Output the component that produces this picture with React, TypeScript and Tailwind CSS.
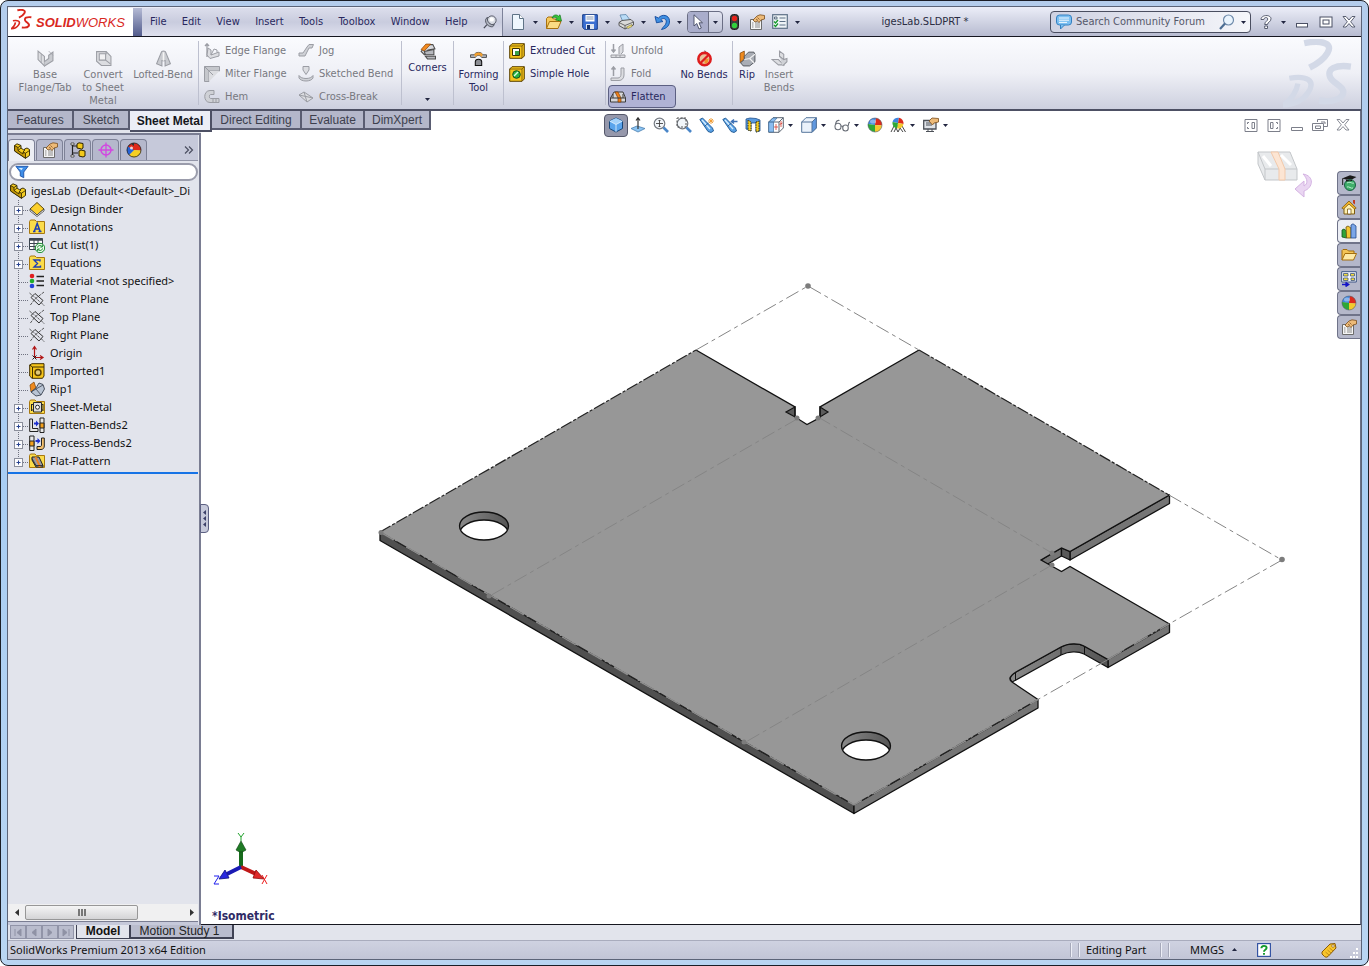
import React from "react";

type Kids = { children?: React.ReactNode };

const Ico = ({ children, c = "size-4" }: Kids & { c?: string }) => (
  <svg viewBox="0 0 16 16" className={`${c} shrink-0`} fill="none" aria-hidden="true">
    {children}
  </svg>
);

const Caret = ({ c = "" }: { c?: string }) => (
  <svg viewBox="0 0 5 3" className={`h-[3px] w-[5px] shrink-0 ${c}`} aria-hidden="true">
    <path d="M0 0H5L2.5 3Z" fill="#222640" />
  </svg>
);

/* ---------- shared icons ---------- */

const Sphere = () => (
  <>
    <path d="M8 8L1 7A7 7 0 0 1 9 1Z" fill="#3d86e0" />
    <path d="M8 8L9 1A7 7 0 0 1 15 8.500Z" fill="#dc2a1c" />
    <path d="M8 8L15 8.500A7 7 0 0 1 8 15Z" fill="#f4c92d" />
    <path d="M8 8V15A7 7 0 0 1 1 7Z" fill="#2fa836" />
    <circle cx="8" cy="8" r="7" stroke="#55606e" strokeWidth=".6" />
    <ellipse cx="6" cy="4.500" rx="3" ry="2" fill="#fff" opacity=".4" />
  </>
);

const Props = () => (
  <>
    <path d="M1.500 5.500H12.500V15.500H1.500Z" fill="#f4f4f4" stroke="#6b6b6b" />
    <path d="M3 9H4.500M6 9H11M3 11H4.500M6 11H11M3 13H4.500M6 13H11" stroke="#8a8a8a" />
    <path d="M4 6L8 2L11 .8L15.500 1.500V5L12 6L10 8.500L8.500 7L6 8Z" fill="#edba78" stroke="#7a4c1c" strokeWidth=".8" />
    <path d="M7 5L9 6.500M8.500 3.500L10.500 5.500" stroke="#7a4c1c" strokeWidth=".7" />
  </>
);

const Part = () => (
  <>
    <path d="M.6 2.500L3 .8L7 2.500V5L10.500 7.500L10.500 6L13 5L15.500 6.500V12.500L11.500 15.300L.6 8Z" fill="#f5cd22" stroke="#2b2200" strokeWidth=".9" />
    <path d="M.6 2.500L4 4.500V7.500L9 11V9L11.500 10.200V15.300L.6 8Z" fill="#c79a08" stroke="#2b2200" strokeWidth=".8" />
    <path d="M4 4.500L7 2.500M4 7.500L7 5M9 9L10.500 7.500M11.500 10.200L15.500 7.500" stroke="#2b2200" strokeWidth=".8" />
  </>
);

/* ---------- title bar ---------- */

const DsMark = ({ c }: { c: string }) => (
  <svg viewBox="0 0 66 66" className={`shrink-0 ${c}`} fill="none" stroke="currentColor" aria-hidden="true">
    <path d="M20 4C34 1 48 3 42 13C38 20 31 24 25 27" strokeWidth="6" />
    <path d="M6 37C22 34 31 39 24 50C19 58 10 62 1 62C8 57 13 49 14 42" strokeWidth="5" />
    <path d="M64 26C50 24 40 28 45 37C49 43 60 46 56 53C52 59 42 59 34 58" strokeWidth="6" />
  </svg>
);

const menus = ["File", "Edit", "View", "Insert", "Tools", "Toolbox", "Window", "Help"];

const quick: { name: string; art: React.ReactNode }[] = [
  {
    name: "New",
    art: (
      <>
        <path d="M2.500.5H9.500L13.500 4.500V15.500H2.500Z" fill="#eef6fd" stroke="#5f7386" />
        <path d="M9.500.5V4.500H13.500" fill="#fff" stroke="#5f7386" />
      </>
    ),
  },
  {
    name: "Open",
    art: (
      <>
        <path d="M.5 14.500V4.500L2 3H6L7.500 5H12.500V7" fill="#f6c95c" stroke="#a8710f" />
        <path d="M.5 14.500L3.500 7.500H15L12 14.500Z" fill="#fbdc84" stroke="#a8710f" />
        <path d="M6 4C7 .8 10.500 0 12.500 2.200L14 .8L15.500 7L9.500 6L11 4.500C10 3 8 2.800 6 4Z" fill="#35c43a" stroke="#13771b" strokeWidth=".7" />
      </>
    ),
  },
  {
    name: "Save",
    art: (
      <>
        <path d="M.7.700H15.300V15.300H2.500L.7 13.500Z" fill="#3b6fd2" stroke="#143a86" />
        <path d="M3.500 1H12.500V7.500H3.500Z" fill="#fff" />
        <path d="M4.500 3H11.500M4.500 5H11.500" stroke="#8597b3" />
        <path d="M4 10H12V15H4Z" fill="#dfe6f2" />
        <path d="M5 11H8V15H5Z" fill="#1a356d" />
      </>
    ),
  },
  {
    name: "Print",
    art: (
      <>
        <path d="M2 1L8 .5L12 6L5 8Z" fill="#b9dcf7" stroke="#5e86ab" strokeWidth=".8" />
        <path d="M1 8.500L4 6.500L13 5.500L15.500 8V11L7 15L1 11.500Z" fill="#d9d9d9" stroke="#4c4c4c" strokeWidth=".9" />
        <path d="M1 8.500L7 11.500L15.500 8M7 11.500V15" stroke="#4c4c4c" strokeWidth=".8" />
        <path d="M8.500 13L14 10.500V12.500L10 14.500Z" fill="#f4e27c" stroke="#66602a" strokeWidth=".5" />
      </>
    ),
  },
  {
    name: "Undo",
    art: (
      <path
        d="M1 2.500L2.500 8.800L9 7.500L6.800 5.800C9 3.500 12.500 4.500 12.300 8C12 11.500 9 12.500 7.500 15.500C13 14.500 16 11 15.500 6.500C15 1 8 -.5 4.500 4Z"
        fill="#3f8fe2"
        stroke="#134a9c"
        strokeWidth=".9"
      />
    ),
  },
];

const winBtn = "flex items-center justify-center text-[#50556a]";

const TitleBar = () => (
  <header className="flex h-[30px] shrink-0 items-stretch border-b border-[#15161f] bg-linear-to-b from-[#eceef8] to-[#b7bbd0] pt-px">
    <div className="flex w-[125px] shrink-0 items-center gap-1 bg-white pl-[3px] pt-0.5 text-[#d9281e]">
      <DsMark c="size-[21px] -mt-2" />
      <span className="text-[13px] leading-4 italic">
        <b>SOLID</b>WORKS
      </span>
    </div>
    <div className="w-[9px] shrink-0 bg-linear-to-b from-[#b6bbd5] to-[#535c8c]" />
    <nav className="tah flex w-[361px] shrink-0 items-center justify-between border-r border-[#7d8299] bg-linear-to-b from-[#dcdeec] via-[#c9ccde] to-[#dfe1ee] pl-2 pr-[5px] text-[11px] text-[#28285e]">
      {menus.map((m) => (
        <button key={m} className="leading-4">
          {m}
        </button>
      ))}
      <button aria-label="Pin menu">
        <Ico c="size-[14px]">
          <circle cx="10" cy="6" r="5" fill="#d8dbe3" stroke="#4c4f5c" />
          <path d="M5 2.500C4 7 8 12 13 11L11 13.500C6 14 2 9 3 5Z" fill="#aeb2be" stroke="#4c4f5c" />
          <path d="M4.500 11L1 15" stroke="#4c4f5c" strokeWidth="1.500" />
          <circle cx="10" cy="5" r="2.500" fill="#fff" />
        </Ico>
      </button>
    </nav>
    <div className="flex shrink-0 items-center pl-[7px]">
      {quick.map((q) => (
        <div key={q.name} className="flex w-9 items-center gap-[7px]">
          <button aria-label={q.name}>
            <Ico>{q.art}</Ico>
          </button>
          <Caret />
        </div>
      ))}
      <div className="-ml-[3px] flex h-[22px] w-9 overflow-hidden rounded border border-[#6a6e84]">
        <button aria-label="Select" className="flex w-[21px] items-center justify-center border-r border-[#6a6e84] bg-[#a9adcb]">
          <Ico>
            <path d="M4 .8V12L6.800 9.500L9 15L11.300 14L9 8.800H12.500Z" fill="#fff" stroke="#444a63" strokeWidth=".9" />
          </Ico>
        </button>
        <button aria-label="Select options" className="flex flex-1 items-center justify-center">
          <Caret />
        </button>
      </div>
      <button aria-label="Rebuild" className="ml-[3px]">
        <Ico>
          <rect x="4.500" y=".5" width="8" height="15" rx="3" fill="#3c3c3c" stroke="#1c1c1c" />
          <circle cx="8.500" cy="4.500" r="2.700" fill="#e5231b" />
          <circle cx="8.500" cy="11.500" r="2.700" fill="#31cf3c" />
        </Ico>
      </button>
      <button aria-label="File properties" className="ml-[7px]">
        <Ico>
          <Props />
        </Ico>
      </button>
      <button aria-label="Options" className="ml-[7px]">
        <Ico>
          <rect x=".7" y=".7" width="14.600" height="13.600" fill="#eef3f6" stroke="#5d7086" strokeWidth="1.200" />
          <path d="M7.500 4H13.500M7.500 7.500H13.500M7.500 11H13.500" stroke="#5d7086" />
          <path d="M2.500 3H5V5H2.500Z" stroke="#3f536b" strokeWidth=".8" />
          <path d="M2 7.500L3.500 9L6 6M2 11L3.500 12.500L6 9.500" stroke="#159a2a" strokeWidth="1.300" />
        </Ico>
      </button>
      <Caret c="ml-[7px]" />
    </div>
    <div className="tah min-w-0 flex-1 self-center text-center text-[11px] leading-4 text-[#2a2d42]">igesLab.SLDPRT *</div>
    <div className="flex shrink-0 items-center">
      <div className="flex h-[22px] w-[201px] items-center rounded border border-[#4a4e60] bg-linear-to-r from-[#cfd2e2] to-[#f5f6fa] pl-[5px] pr-1">
        <Ico>
          <rect x=".5" y="1" width="15" height="10" rx="3" fill="#7cc0f2" stroke="#3480c0" />
          <path d="M4.500 11V15L8.500 11" fill="#7cc0f2" stroke="#3480c0" />
          <path d="M3 4H13M3 6.200H13M3 8.400H11" stroke="#fff" strokeWidth=".9" />
        </Ico>
        <input
          aria-label="Search Community Forum"
          placeholder="Search Community Forum"
          className="tah ml-1 min-w-0 flex-1 bg-transparent text-[11px] leading-4 outline-none placeholder:text-[#55586a] placeholder:opacity-100"
        />
        <button aria-label="Search" className="mr-1.5">
          <Ico>
            <circle cx="9.500" cy="6" r="5" fill="#eaf4fd" stroke="#6f8bab" strokeWidth="1.200" />
            <path d="M6 9.500L1 15" stroke="#4d6e93" strokeWidth="2.200" />
          </Ico>
        </button>
        <Caret />
      </div>
      <div className="flex items-center">
        <button aria-label="Help" className={`${winBtn} ml-[7px]`}>
          <Ico>
            <path
              d="M3 5.500C3 .5 13 .2 13 4.800C13 8 9.500 8 9.500 10.500H6.700C6.700 7.500 9.800 7 9.800 5C9.800 3 6 3 5.800 5.500ZM6.700 12H9.500V14.500H6.700Z"
              fill="#fff"
              stroke="#4b5064"
              strokeWidth=".9"
            />
          </Ico>
        </button>
        <Caret c="ml-[7px]" />
        <button aria-label="Minimize" className={`${winBtn} ml-2`}>
          <Ico>
            <rect x="2.500" y="9.500" width="11" height="3.500" fill="#fff" stroke="#4b5064" />
          </Ico>
        </button>
        <button aria-label="Maximize" className={`${winBtn} ml-2`}>
          <Ico>
            <rect x="2" y="3" width="12" height="10" fill="#fff" stroke="#4b5064" />
            <rect x="5" y="6" width="6" height="4" stroke="#4b5064" />
          </Ico>
        </button>
        <button aria-label="Close" className={`${winBtn} ml-[7px] mr-1`}>
          <Ico>
            <path d="M2 2.500H5L8 6L11 2.500H14L9.700 7.800L14 13H11L8 9.600L5 13H2L6.300 7.800Z" fill="#fff" stroke="#4b5064" strokeWidth=".9" />
          </Ico>
        </button>
      </div>
    </div>
  </header>
);

/* ---------- command ribbon ---------- */

const Sep = () => <div className="my-1 w-px shrink-0 bg-[#bdc0cf]" />;

const BigCmd = ({ lines, art, dim, w, top = "pt-[13px]", caret }: { lines: string[]; art: React.ReactNode; dim?: boolean; w: string; top?: string; caret?: boolean }) => (
  <button disabled={dim} className={`flex shrink-0 flex-col items-center self-stretch leading-[13px] ${top} ${w} ${dim ? "text-[#77787f]" : "text-[#28285e]"}`}>
    <Ico c="size-[17px] mb-px">{art}</Ico>
    {lines.map((l) => (
      <span key={l} className="whitespace-nowrap">
        {l}
      </span>
    ))}
    {caret && <Caret c="mt-6" />}
  </button>
);

const SmallCmd = ({ label, art, dim, on }: { label: string; art: React.ReactNode; dim?: boolean; on?: boolean }) => (
  <button
    disabled={dim}
    className={`flex h-[23px] items-center gap-[5px] rounded border px-px pr-[9px] whitespace-nowrap leading-4 ${
      on ? "border-[#5c6082] bg-[#b0b3d5]" : "border-transparent"
    } ${dim ? "text-[#77787f]" : "text-[#28285e]"}`}
  >
    <Ico>{art}</Ico>
    {label}
  </button>
);

const G = "#9b9da4";
const L = "#dcdde1";

const Ribbon = () => (
  <section className="tah relative flex h-[74px] shrink-0 border-b-2 border-[#4d5064] bg-linear-to-b from-[#fafbfe] via-[#eff0f6] to-[#cdd0df] text-[11px]">
    <div className="flex w-[190px] shrink-0 pl-2">
      <BigCmd dim w="w-[58px]" lines={["Base", "Flange/Tab"]} art={<><path d="M1 1L7 6V15L1 9Z" fill={L} stroke={G} /><path d="M7 15L15 10V2L11 5V8L7 11" fill="#c9cbd0" stroke={G} /><path d="M4 4L4 12M11 1L15 5" stroke={G} strokeWidth=".7" /></>} />
      <BigCmd dim w="w-[58px]" lines={["Convert", "to Sheet", "Metal"]} art={<><path d="M1.500 1.500H10.500L15 6V14.500H6L1.500 10.500Z" fill={L} stroke={G} /><path d="M4 3.500H10V9.500H4ZM10 9.500L14.500 13M10.500 1.500V4" fill="#f1f1f3" stroke={G} /></>} />
      <BigCmd dim w="w-[62px]" lines={["Lofted-Bend"]} art={<><path d="M6 2C6 .5 10 .5 10 2L14.500 13L9.500 15V10H6.500V15L1.500 13Z" fill="#c9cbd0" stroke={G} /><path d="M8 2V10" stroke="#f5f5f5" strokeWidth="1.500" /></>} />
    </div>
    <Sep />
    <div className="flex w-[94px] shrink-0 flex-col items-start pl-[3px] pt-0.5">
      <SmallCmd dim label="Edge Flange" art={<><path d="M3 14V1M1 3L3 .8L5 3" stroke={G} strokeWidth="1.300" /><path d="M4 5L7 7V12L15 9V13L6 15.500L3 12Z" fill={L} stroke={G} /><path d="M7 12L10 6L13 7V9.500" stroke={G} /></>} />
      <SmallCmd dim label="Miter Flange" art={<><path d="M.5.5H15.500V5H5V15.500H.5Z" fill="#c5c7cc" stroke={G} /><path d="M5 5H15.500L5 15.500Z" fill={L} /><path d="M.5.5L9 9" stroke={G} /></>} />
      <SmallCmd dim label="Hem" art={<><path d="M10 1.500H6C-1 1.500-1 13.500 6 13.500H15V9.500H6.500C5 9.500 5 5.500 6.500 5.500H10Z" fill="#cfd1d6" stroke={G} /><path d="M9 13V10M12 13V10" stroke={G} /></>} />
    </div>
    <div className="flex w-[108px] shrink-0 flex-col items-start pl-[3px] pt-0.5">
      <SmallCmd dim label="Jog" art={<path d="M1 10H5L9 4L11 1.500H15.500L14 5H11L7 13H1Z" fill="#cfd1d6" stroke={G} />} />
      <SmallCmd dim label="Sketched Bend" art={<><path d="M5 .5H11V4L8 8.500L5 4Z" fill={L} stroke={G} /><path d="M1 9.500C3 13.500 13 13.500 15 9.500V12C13 16 3 16 1 12Z" fill="#cfd1d6" stroke={G} /></>} />
      <SmallCmd dim label="Cross-Break" art={<><path d="M1 6L6 3L15 9L9 13Z" fill={L} stroke={G} /><path d="M6 3L9 13M1 6L15 9" stroke={G} /></>} />
    </div>
    <Sep />
    <BigCmd w="w-[51px]" top="pt-1.5" caret lines={["Corners"]} art={<><path d="M2 8L7 1.500H13L15 5.500L8.500 6.500L5 11Z" fill="#d9dade" stroke="#4e4e4e" /><path d="M2 6L6.500 1H11L5 7.500Z" fill="#f28a1f" stroke="#8d4708" strokeWidth=".7" /><path d="M5 8L14 6V11H6ZM6 12.500H15.500V15H8Z" fill="#b6b8be" stroke="#4e4e4e" /></>} />
    <Sep />
    <BigCmd w="w-[49px]" lines={["Forming", "Tool"]} art={<><path d="M.5 4.500H4C5 1.500 11 1.500 12 4.500H15.500V7H11C10 4.500 6 4.500 5 7H.5Z" fill="#b6b8be" stroke="#3c3c3c" strokeWidth=".8" /><path d="M4 4.500C5 1.500 11 1.500 12 4.500L11 6.500C10 4.500 6 4.500 5 6.500Z" fill="#f2a02f" /><path d="M5 14.500V11C5 8 11 8 11 11V14.500Z" fill="#8c8e94" stroke="#111" /></>} />
    <Sep />
    <div className="flex w-[101px] shrink-0 flex-col items-start pl-[3px] pt-0.5">
      <SmallCmd label="Extruded Cut" art={<><path d="M.7 3L3 .7H15.300V13L13 15.300H.7Z" fill="#f6c51b" stroke="#5b4100" /><path d="M.7 3H13V15.300M13 3L15.300.7" stroke="#5b4100" strokeWidth=".7" /><path d="M3.500 5.500H10.500V12.500H3.500Z" fill="#fff" stroke="#3c3000" /><path d="M6 8H10V12H6Z" fill="#39a04b" /></>} />
      <SmallCmd label="Simple Hole" art={<><path d="M.7 3L3 .7H15.300V13L13 15.300H.7Z" fill="#f6c51b" stroke="#5b4100" /><path d="M.7 3H13V15.300M13 3L15.300.7" stroke="#5b4100" strokeWidth=".7" /><circle cx="7.500" cy="8.500" r="3.800" fill="#2bb544" stroke="#134e1c" /><path d="M5 10L9 6" stroke="#d9ffdf" strokeWidth="1.500" /></>} />
    </div>
    <Sep />
    <div className="flex w-[70px] shrink-0 flex-col items-start pl-0.5 pt-0.5">
      <SmallCmd dim label="Unfold" art={<><path d="M3.500 1V9M1.500 6.500L3.500 9L5.500 6.500" stroke={G} strokeWidth="1.500" /><path d="M9 11V4L13 1V9L11 11M1 12H15V14.500H1ZM6 12V14M10 12V14" fill={L} stroke={G} /></>} />
      <SmallCmd dim label="Fold" art={<><path d="M3.500 10V1M1.500 3.500L3.500 1L5.500 3.500" stroke={G} strokeWidth="1.500" /><path d="M11 2H14V9C14 12 12 14.500 9 14.500H1V12H8C10 12 11 10 11 8Z" fill={L} stroke={G} /></>} />
      <SmallCmd on label="Flatten" art={<><path d="M.5 9L4 3H13L15.500 9V13H.5Z" fill="#d6d7da" stroke="#3b3b3b" /><path d="M5 3L8 3L11 9V13H8V9Z" fill="#f2811d" stroke="#7d3d03" strokeWidth=".7" /><path d="M.5 9H15.500M3 9V5M13 9V5" stroke="#3b3b3b" /></>} />
    </div>
    <BigCmd w="w-[56px]" lines={["No Bends"]} art={<><path d="M8 0L12 4L8 5Z" fill="#666" /><circle cx="8" cy="8.500" r="5.800" fill="#e9c39c" stroke="#de1c1c" strokeWidth="2.400" /><path d="M8 9L12 8L11 12L8 13Z" fill="#f0912c" /><path d="M4 12.500L12 4.500" stroke="#de1c1c" strokeWidth="2.200" /></>} />
    <Sep />
    <BigCmd w="w-[28px]" lines={["Rip"]} art={<><path d="M1 3L5 1V8L1 12Z" fill="#ef8a1e" stroke="#7d4408" strokeWidth=".7" /><path d="M5 6L9 2H14L15 4V11L10 15H4L1.500 12L5 9Z" fill="#a9adb5" stroke="#45484f" strokeWidth=".8" /><path d="M5 9L10 8L15 4M10 8L14 12" stroke="#f2f2f2" /></>} />
    <BigCmd dim w="w-[36px]" lines={["Insert", "Bends"]} art={<><path d="M8 1L12 4V9L8 6ZM1 9H7L12 14H7Z" fill={L} stroke={G} /><path d="M8 6L12 9L15 8V11L11 15" fill="#cfd1d6" stroke={G} /></>} />
    <div className="flex flex-1 justify-end overflow-hidden pr-2 pt-[2px] text-[#d3d9e7]">
      <DsMark c="size-[70px]" />
    </div>
  </section>
);

/* ---------- command manager tabs ---------- */

const cmTabs: [string, string][] = [
  ["Features", "w-[66px]"],
  ["Sketch", "w-[56px]"],
  ["Sheet Metal", "w-[82px]"],
  ["Direct Editing", "w-[90px]"],
  ["Evaluate", "w-[63px]"],
  ["DimXpert", "w-[66px]"],
];

const CommandTabs = () => (
  <nav className="relative z-10 flex h-[22px] w-max items-start text-[12px] leading-4">
    {cmTabs.map(([t, w]) =>
      t === "Sheet Metal" ? (
        <button key={t} className={`${w} h-[21px] border-b-2 border-r-2 border-[#4d5064] bg-[#eceef6] font-bold text-[#15161c]`}>
          {t}
        </button>
      ) : (
        <button key={t} className={`${w} h-[19px] border-b-2 border-r-2 border-[#5a5d72] bg-[#b4b7ca] text-[#3d3f4d]`}>
          {t}
        </button>
      ),
    )}
  </nav>
);

/* ---------- feature manager ---------- */

const fmTabs: { name: string; art: React.ReactNode }[] = [
  { name: "Feature tree", art: <Part /> },
  { name: "Property manager", art: <Props /> },
  {
    name: "Configurations",
    art: (
      <>
        <path d="M2.500 1V14M2.500 4H8M2.500 11H8" stroke="#222" strokeWidth="1.200" />
        <path d="M1 1H4V3H1ZM1 13H4V15H1Z" fill="#fff" stroke="#222" strokeWidth=".7" />
        <path d="M7 2L9 .8L13 1.500V6L11.500 7L7 6ZM9 9L11 8L15 9V14L13 15L9 14Z" fill="#f2c81a" stroke="#2b2200" />
      </>
    ),
  },
  {
    name: "DimXpert manager",
    art: (
      <>
        <circle cx="8" cy="8" r="5" stroke="#d247e0" strokeWidth="1.500" />
        <path d="M8 .5V15.500M.5 8H15.500" stroke="#d247e0" strokeWidth="1.300" />
      </>
    ),
  },
  {
    name: "Display manager",
    art: (
      <>
        <path d="M8 8L2 4.500A7 7 0 0 1 8 1Z" fill="#333" />
        <path d="M8 8V1A7 7 0 0 1 15 8.500Z" fill="#df2a1c" />
        <path d="M8 8L15 8.500A7 7 0 0 1 3 13Z" fill="#f5cf22" />
        <path d="M8 8L3 13A7 7 0 0 1 2 4.500Z" fill="#2563d8" />
        <path d="M8 8L2 4.500L5 2L8 4Z" fill="#df2a1c" />
        <circle cx="8" cy="8" r="7" stroke="#222" strokeWidth=".8" />
        <circle cx="5.500" cy="6" r="1.500" fill="#fff" opacity=".8" />
      </>
    ),
  },
];

const Folder = ({ children }: Kids) => (
  <>
    <path d="M.5 14.500V2.500L1.500 1H6L7.500 2.500H15.500V14.500Z" fill="#fbdc4a" stroke="#a8780e" />
    {children}
  </>
);

const Plane = () => (
  <>
    <path d="M6 2.500L14 9.500L10 14L2 6.500Z" stroke="#333" />
    <path d="M.5 2L4.500 5.500M12 11.500L15.500 15M15 1L6 8L1 14.500M5.500 6L10.500 10.500" stroke="#333" strokeWidth=".8" strokeDasharray="3 1" />
  </>
);

const tree: { t: string; plus?: boolean; art: React.ReactNode }[] = [
  {
    t: "Design Binder",
    plus: true,
    art: (
      <>
        <path d="M1 8L8 1.500L15 8L8 14Z" fill="#fcd02c" stroke="#5b4a10" />
        <path d="M1 8V10L8 15.500L15 10V8L8 14Z" fill="#fff" stroke="#3b3b3b" strokeWidth=".8" />
      </>
    ),
  },
  {
    t: "Annotations",
    plus: true,
    art: (
      <Folder>
        <path d="M4 12.500H6.500M9.500 12.500H12.500M5.200 12.500L8.200 4.500L11.200 12.500M6.300 10H10" stroke="#1f3fb5" strokeWidth="1.500" />
      </Folder>
    ),
  },
  {
    t: "Cut list(1)",
    plus: true,
    art: (
      <>
        <path d="M.5 1.500H13.500V12.500H.5Z" fill="#fff" stroke="#3d4650" />
        <path d="M.5 2.500H13.500" stroke="#3d4650" strokeWidth="2.500" />
        <path d="M.5 6.500H13.500M.5 9.500H13.500M5 3V12.500M9 3V12.500" stroke="#3d4650" />
        <circle cx="11" cy="11" r="4.700" fill="#e9fbea" stroke="#158a2b" />
        <path d="M8.500 10.500C9 8 12 8 13 9.500M13.500 11.500C13 14 10 14 9 12.500M13.300 8V10H11.300M8.700 14V12H10.700" stroke="#158a2b" />
      </>
    ),
  },
  {
    t: "Equations",
    plus: true,
    art: (
      <Folder>
        <path d="M11 6.500V5H5L8.500 8.500L5 12H11.500V10.500" stroke="#1f3fb5" strokeWidth="1.400" />
      </Folder>
    ),
  },
  {
    t: "Material <not specified>",
    art: (
      <>
        <circle cx="3" cy="3" r="2.300" fill="#e02020" />
        <circle cx="3" cy="8" r="2.300" fill="#1fae2c" />
        <circle cx="3" cy="13" r="2.300" fill="#2443d8" />
        <path d="M7.500 3.500H15M7.500 8H15M7.500 12.500H15" stroke="#222" strokeWidth="1.300" />
      </>
    ),
  },
  { t: "Front Plane", art: <Plane /> },
  { t: "Top Plane", art: <Plane /> },
  { t: "Right Plane", art: <Plane /> },
  {
    t: "Origin",
    art: (
      <>
        <path d="M5.500 12V2M3.500 4.500L5.500 1.500L7.500 4.500M6 12.500H13M11 10.500L14 12.500L11 14.500" stroke="#b01515" strokeWidth="1.200" />
        <path d="M3.500 10.500L7.500 14.500M7.500 10.500L3.500 14.500" stroke="#222" />
      </>
    ),
  },
  {
    t: "Imported1",
    art: (
      <>
        <path d="M.7 2L3 .7H15V13L13.500 15.300H3L.7 13Z" fill="#f6c51b" stroke="#3f2e00" />
        <path d="M3.500 4H15M3.500 4V15M.7 2L3.500 4" stroke="#3f2e00" />
        <circle cx="9" cy="9.500" r="3" fill="#e0c97a" stroke="#5b4100" strokeWidth="1.500" />
      </>
    ),
  },
  {
    t: "Rip1",
    art: (
      <>
        <path d="M1 4L5 1L7 7L2 11Z" fill="#ef8a1e" stroke="#7d4408" strokeWidth=".7" />
        <path d="M7 7L10 2L14 3.500L15.500 8L12 14L7 15L2 11Z" fill="#b9c4d4" stroke="#3c4452" strokeWidth=".9" />
        <path d="M2 11L7 8L12 14M7 8L14 4" stroke="#3c4452" strokeWidth=".8" />
      </>
    ),
  },
  {
    t: "Sheet-Metal",
    plus: true,
    art: (
      <Folder>
        <path d="M4.500 3.500H12.500V13H4.500ZM2.500 5V12M14 5V12M4.500 5.500H2.500M4.500 11H2.500M12.500 5.500H14M12.500 11H14" fill="#ddd" stroke="#2a2a2a" />
        <circle cx="8.500" cy="8.200" r="2" fill="#fff" stroke="#2a2a2a" />
      </Folder>
    ),
  },
  {
    t: "Flatten-Bends2",
    plus: true,
    art: (
      <>
        <path d="M.7 2H3.500V11.500H9V14.500H.7Z" fill="#e8e8e8" stroke="#222" />
        <path d="M11 1H15V15.500H11Z" fill="#e8e8e8" stroke="#222" />
        <path d="M11 6H15V11H11Z" fill="#f3a01e" stroke="#222" />
        <path d="M5 5.500H7V3.500L10 6.500L7 9.500V7.500H5Z" fill="#1d2fd0" />
      </>
    ),
  },
  {
    t: "Process-Bends2",
    plus: true,
    art: (
      <>
        <path d="M.7 1H5V15.500H.7Z" fill="#e8e8e8" stroke="#222" />
        <path d="M.7 6H5V11H.7Z" fill="#f3a01e" stroke="#222" />
        <path d="M12.500 3H15.300V11C15.300 13 14 14.500 12 14.500H8V11.500H11C12 11.500 12.500 11 12.500 10Z" fill="#f3c06e" stroke="#222" />
        <path d="M6.500 5H8.500V3L11.500 6L8.500 9V7H6.500Z" fill="#1d2fd0" />
      </>
    ),
  },
  {
    t: "Flat-Pattern",
    plus: true,
    art: (
      <Folder>
        <path d="M3 4H10L14 12.500V14H7L3 7Z" fill="#9a9ca2" stroke="#222" />
        <path d="M5.500 4H7.500L11.500 12.500V14H9.500V12.500Z" fill="#f2811d" />
        <path d="M3 5.500L7 12.500H14" stroke="#222" strokeWidth=".8" />
      </Folder>
    ),
  },
];

const FeaturePanel = () => (
  <aside className="flex w-[193px] shrink-0 flex-col bg-[#e2e4ec]">
    <CommandTabs />
    <div className="flex min-h-0 flex-1 flex-col border-r-2 border-t-2 border-[#7a7d92] pr-px">
      <div className="flex h-[26px] shrink-0 items-end gap-px border-b border-[#9396a8] bg-[#c6c9da]">
        {fmTabs.map((f, i) => (
          <button
            key={f.name}
            aria-label={f.name}
            className={`flex w-[27px] items-center justify-center rounded-t border border-b-0 border-[#7d8196] ${
              i === 0 ? "-mb-px h-[22px] bg-[#eceef4]" : "h-[21px] bg-[#b5b8cc]"
            }`}
          >
            <Ico>{f.art}</Ico>
          </button>
        ))}
        <button aria-label="Expand panel" className="ml-auto mr-1 mb-1.5">
          <svg viewBox="0 0 10 8" className="h-2 w-[10px]" fill="none" stroke="#4b4e60" strokeWidth="1.200" aria-hidden="true">
            <path d="M1 .5L4.500 4L1 7.500M5 .5L8.500 4L5 7.500" />
          </svg>
        </button>
      </div>
      <div className="ml-px mt-0.5 flex h-[18px] shrink-0 items-center rounded-full border-2 border-[#9a9cab] bg-white pl-1">
        <Ico c="size-[14px]">
          <path d="M1 1.500H15L10 8V14.500L6 12.500V8Z" fill="#3e8ee8" stroke="#1a4fa6" />
          <path d="M4 3.500H9L7.500 6Z" fill="#d3ecff" />
        </Ico>
        <input aria-label="Filter tree" className="min-w-0 flex-1 bg-transparent text-[11px] outline-none" />
      </div>
      <div className="seg mt-px shrink-0 border-b-2 border-[#1673e6] pb-0.5 text-[11px] leading-[18px] text-[#111]">
        <div className="flex h-[18px] items-center gap-[5px] whitespace-pre pl-0.5">
          <Ico>
            <Part />
          </Ico>
          igesLab  (Default&lt;&lt;Default&gt;_Di
        </div>
        <ul>
          {tree.map((n, i) => (
            <li key={n.t} className="flex h-[18px] items-center whitespace-nowrap pl-1.5">
              <svg viewBox="0 0 15 18" className="h-[18px] w-[15px] shrink-0" fill="none" aria-hidden="true">
                <path d={i === tree.length - 1 ? "M4.500 0V10" : "M4.500 0V18"} stroke="#6f7280" strokeDasharray="1 1" />
                <path d="M5 10.500H15" stroke="#6f7280" strokeDasharray="1 1" />
                {n.plus && (
                  <>
                    <rect x=".5" y="6.500" width="8" height="8" fill="#fbfbfd" stroke="#8b8f9c" />
                    <path d="M2.500 10.500H6.500M4.500 8.500V12.500" stroke="#26418f" />
                  </>
                )}
              </svg>
              <Ico>{n.art}</Ico>
              <span className="ml-[5px]">{n.t}</span>
            </li>
          ))}
        </ul>
      </div>
      <div className="flex-1" />
      <div className="flex h-[17px] shrink-0 items-center bg-[#f0f0f1]">
        <button aria-label="Scroll left" className="flex w-[17px] justify-center">
          <svg viewBox="0 0 4 7" className="h-[7px] w-1" aria-hidden="true">
            <path d="M4 0V7L0 3.500Z" fill="#333" />
          </svg>
        </button>
        <div className="flex h-[15px] w-[113px] items-center justify-center gap-px rounded-xs border border-[#979797] bg-linear-to-b from-[#f5f5f5] to-[#d4d4d6]">
          <i className="h-[7px] w-0.5 bg-[#777]" />
          <i className="h-[7px] w-0.5 bg-[#777]" />
          <i className="h-[7px] w-0.5 bg-[#777]" />
        </div>
        <button aria-label="Scroll right" className="ml-auto mr-1">
          <svg viewBox="0 0 4 7" className="h-[7px] w-1" aria-hidden="true">
            <path d="M0 0V7L4 3.500Z" fill="#333" />
          </svg>
        </button>
      </div>
      <div className="h-1 shrink-0 border-t border-[#7a7d92] bg-[#c6c9da]" />
    </div>
  </aside>
);

/* ---------- graphics area ---------- */

const Glass = () => (
  <>
    <circle cx="6.500" cy="6.500" r="5.300" fill="#f2f6fa" stroke="#777c84" strokeWidth="1.200" />
    <path d="M10.500 10.500L15 15" stroke="#4a86c8" strokeWidth="2.600" />
  </>
);

const Tube = () => (
  <>
    <path d="M.8 2.500L3.500 1L13.500 11L14.500 14L12 15.500L9 14.500Z" fill="#5aa2e6" stroke="#1d568f" strokeWidth=".9" />
    <path d="M3 3L11 12" stroke="#d8efff" strokeWidth="1.300" />
    <path d="M6 9L9.500 6" stroke="#1d568f" strokeWidth=".9" />
  </>
);

const hud: { name: string; art: React.ReactNode; drop?: boolean }[] = [
  {
    name: "Normal to",
    art: (
      <>
        <path d="M1 11.500L7 9L15 11.500L8 15Z" fill="#8cc4f2" stroke="#4a7fb0" strokeWidth=".8" />
        <path d="M8 12V1M6 3.500L8 .8L10 3.500" stroke="#333" strokeWidth="1.200" />
      </>
    ),
  },
  { name: "Zoom to fit", art: <><Glass /><path d="M6.500 3V10M3 6.500H10M5.500 4L6.500 3L7.500 4M5.500 9L6.500 10L7.500 9" stroke="#444" strokeWidth=".9" /></> },
  { name: "Zoom to area", art: <><Glass /><path d="M1 1H10V10H1Z" stroke="#555" strokeDasharray="2 1.500" /></> },
  { name: "Zoom in or out", art: <><Tube /><path d="M12 1V7M9 4H15M10 2L14 6M14 2L10 6" stroke="#f0982c" strokeWidth=".9" /></> },
  { name: "Previous view", art: <><Tube /><path d="M15.500 4.500H10M12 2.500L9.500 4.500L12 6.500" stroke="#3c6fb4" strokeWidth="1.500" /></> },
  {
    name: "Section view",
    art: (
      <>
        <path d="M1 2L5 1L11 1.500L15 3V14L11 15V6H6V14L1 12Z" fill="#5a9be0" stroke="#22508c" strokeWidth=".8" />
        <path d="M3 3V13L6 14V5ZM11 5L14 4V14L11 15Z" fill="#f5cf22" stroke="#3d3510" strokeDasharray="1.500 1" />
      </>
    ),
  },
  {
    name: "View orientation",
    drop: true,
    art: (
      <>
        <path d="M.7 5L5 .7H15.300V11L11 15.300H.7Z" fill="#fff" stroke="#5c6673" />
        <path d="M.7 5H11V15.300M11 5L15.300.7" stroke="#5c6673" />
        <path d="M.7 5H5.500V15H.7ZM1 5L5 1H9L5.500 5Z" fill="#8abcf0" stroke="#44719f" strokeWidth=".7" />
        <path d="M8 7V13M6 10H10M13 4V10M11.500 7.500L14.500 6" stroke="#d23a2e" strokeWidth=".8" />
      </>
    ),
  },
  {
    name: "Display style",
    drop: true,
    art: (
      <>
        <path d="M.7 5L5 .7H15.300V11L11 15.300H.7Z" fill="#eaf2fb" stroke="#55759c" />
        <path d="M11 5L15.300.7V11L11 15.300Z" fill="#5f98e0" stroke="#55759c" />
        <path d="M.7 5H11" stroke="#55759c" />
      </>
    ),
  },
  {
    name: "Hide or show items",
    drop: true,
    art: (
      <>
        <ellipse cx="4" cy="9.500" rx="3" ry="3.300" stroke="#6a6f78" strokeWidth="1.100" />
        <ellipse cx="11.500" cy="11" rx="2.800" ry="3" stroke="#6a6f78" strokeWidth="1.100" />
        <path d="M7 9.500C7.500 8.500 8.500 9 9 10M1.500 7.500C2 4 3.500 3 5.500 3.500M14 9C15 6.500 14.500 5 16 5.500" stroke="#6a6f78" strokeWidth="1.100" />
      </>
    ),
  },
  { name: "Edit appearance", art: <Sphere /> },
  {
    name: "Apply scene",
    drop: true,
    art: (
      <>
        <path d="M1 15L4 9H12L15.500 15M4 15L6 11L8 15L10 11L13 15" stroke="#444" />
        <path d="M8 6L2.500 5A5.500 5.500 0 0 1 9 .8Z" fill="#3d86e0" />
        <path d="M8 6L9 .8A5.500 5.500 0 0 1 13.500 7Z" fill="#dc2a1c" />
        <path d="M8 6L13.500 7A5.500 5.500 0 0 1 7 11.500Z" fill="#f4c92d" />
        <path d="M8 6L7 11.500A5.500 5.500 0 0 1 2.500 5Z" fill="#2fa836" />
      </>
    ),
  },
  {
    name: "View settings",
    drop: true,
    art: (
      <>
        <path d="M.7 3.500H13V12H.7Z" fill="#dfe3e8" stroke="#4c5058" strokeWidth="1.300" />
        <path d="M3 6H10M3 8H9M5 12V14.500M9 12V14.500M3 14.500H11" stroke="#4c5058" />
        <path d="M6 4L9 1L15.500 1.500V5L11 6L9.500 8Z" fill="#edba78" stroke="#7a4c1c" strokeWidth=".8" />
      </>
    ),
  },
];

const docButtons: { name: string; art: React.ReactNode; w: string }[] = [
  { name: "Previous pane", w: "w-[23px]", art: <path d="M2 2.500H14V14.500H2ZM6 5.500H4.500V7M6 11.500H4.500V10M9 5.500H11.500V11.500H9Z" stroke="#7c7f8a" /> },
  { name: "Next pane", w: "w-[23px]", art: <path d="M2 2.500H14V14.500H2ZM10 5.500H11.500V7M10 11.500H11.500V10M4.500 5.500H7V11.500H4.500Z" stroke="#7c7f8a" /> },
  { name: "Minimize document", w: "w-[23px]", art: <path d="M2.500 10.500H13.500V13.500H2.500Z" fill="#fff" stroke="#7c7f8a" /> },
  { name: "Restore document", w: "w-[23px]", art: <path d="M5.500 5V2.500H15.500V9.500H12M.5 6.500H11.500V13.500H.5ZM3.500 9H8.500V11.500H3.500ZM9 5H13V7" stroke="#7c7f8a" /> },
  { name: "Close document", w: "w-4", art: <path d="M2 2.500H5L8 6L11 2.500H14L9.700 7.800L14 13H11L8 9.600L5 13H2L6.300 7.800Z" fill="#fff" stroke="#7c7f8a" strokeWidth=".9" /> },
];

const taskTabs: { name: string; art: React.ReactNode }[] = [
  {
    name: "Resources",
    art: (
      <>
        <circle cx="9" cy="10" r="5.500" fill="#3fae6a" stroke="#1c5f45" />
        <path d="M6 8C9 6 11 9 13 8M6 12C8 11 10 14 12 13" stroke="#bdf0d0" />
        <path d="M1 3.500L9 .3L15.500 2L9 5.500ZM5 4.500V6.500L11 6V4" fill="#1a1a1a" />
        <path d="M1.700 3.500V10" stroke="#1a1a1a" />
      </>
    ),
  },
  {
    name: "Home",
    art: (
      <>
        <path d="M3 8V15H13.500V8L8 3Z" fill="#fdf0b0" stroke="#7d5a10" />
        <path d="M.8 9L8 2L15.200 9L13.500 10L8 5L2.500 10Z" fill="#f3b528" stroke="#7d5a10" strokeWidth=".8" />
        <path d="M12 1H14V5.500L12 4Z" fill="#c23b22" />
        <path d="M6.500 10H10V15H6.500Z" fill="#fff" stroke="#7d5a10" strokeWidth=".8" />
      </>
    ),
  },
  {
    name: "Design library",
    art: (
      <>
        <path d="M1 7L3 6L5.500 8V15L1 14Z" fill="#2fa33a" stroke="#10501a" strokeWidth=".8" />
        <path d="M5 4L7 3L10 5V15H5.500Z" fill="#f2c530" stroke="#6d5208" strokeWidth=".8" />
        <path d="M10 2L12 .8L15 3V15H10Z" fill="#7aa6e8" stroke="#234a8a" strokeWidth=".8" />
      </>
    ),
  },
  {
    name: "File explorer",
    art: (
      <>
        <path d="M1 13V3.500L2 2.500H6L7.500 4H13V6" fill="#f3c455" stroke="#a46d0a" />
        <path d="M1 13L4 6.500H15.500L12.500 13Z" fill="#fde9a6" stroke="#a46d0a" />
      </>
    ),
  },
  {
    name: "View palette",
    art: (
      <>
        <path d="M.7.700H15.300V11H.7Z" fill="#f4f6fb" stroke="#3d5584" />
        <path d="M2.500 2.500H7V5H2.500ZM9.500 2.500H13.500V5H9.500ZM2.500 7H7V9.500H2.500ZM10 7H13.500V9.500H10Z" fill="#f5dc3a" stroke="#3d5584" strokeWidth=".8" />
        <path d="M1 13.500H6M4.500 11.500L7.500 13.500L4.500 15.500" stroke="#1414c8" strokeWidth="1.600" />
      </>
    ),
  },
  { name: "Appearances", art: <Sphere /> },
  { name: "Custom properties", art: <Props /> },
];

const Model = () => (
  <svg
    viewBox="201 111 1159 813"
    preserveAspectRatio="xMinYMin meet"
    className="absolute inset-0 size-full"
    fill="none"
    role="img"
    aria-label="Flattened sheet metal part"
  >
    <defs>
      <clipPath id="h1">
        <ellipse cx="484" cy="526" rx="24.500" ry="14" />
      </clipPath>
      <clipPath id="h2">
        <ellipse cx="866" cy="746" rx="24.500" ry="14" />
      </clipPath>
      <linearGradient id="wall">
        <stop offset="0" stopColor="#8a8a8a" />
        <stop offset="1" stopColor="#555" />
      </linearGradient>
    </defs>
    <g stroke="#111" strokeWidth="1.300" strokeLinejoin="round">
      <path d="M380 532L854 805V813.500L380 540.500Z" fill="#505050" />
      <path d="M854 805L1038 699.500V708L854 813.500Z" fill="#757575" />
      <path d="M1108 659.500L1169.500 624V632.500L1108 667.500Z" fill="#757575" />
      <path d="M1070 551.500L1169.500 495V503.500L1070 560Z" fill="#757575" />
      <path d="M1041 560L1061.500 548V556L1047 564.500Z" fill="#757575" />
      <path d="M1061.500 548L1070 551.500V560L1061.500 556Z" fill="#5a5a5a" />
      <path d="M1012 682C1008 678 1012 674 1016 672L1061 647C1068 643 1079 643 1084 646L1108 659.500V667.500L1084 654C1078 651 1069 651 1061 655L1016 680Z" fill="url(#wall)" />
      <path d="M1061 647V655M1084.500 646V654M1015.500 672.500V680.500" strokeWidth="1" />
    </g>
    <path
      d="M380 532L696 350L795 407L786 412L797 419L807 424.500L820 417.500L828 412L820 407L919 350L1169.500 495L1070 551.500L1061.500 548L1041 560L1052 566L1061.500 571.500L1070 566.500L1169.500 624L1108 659.500L1084 646C1079 643 1068 643 1061 647L1016 672C1010 676 1008 679 1012 682L1038 699.500L854 805Z"
      fill="#979797"
    />
    <path d="M795 407L786 412L795 417ZM820 407L828 412L820 417Z" fill="#5c5c5c" stroke="#111" strokeWidth="1.200" />
    <path
      d="M696 350L795 407V417L807 424.500L820 417.500V407L919 350M1169.500 495L1070 551.500L1061.500 548L1041 560L1061.500 571.500L1070 566.500L1169.500 624M1108 659.500L1084 646C1079 643 1068 643 1061 647L1016 672C1010 676 1008 679 1012 682L1038 699.500"
      stroke="#111"
      strokeWidth="1.300"
    />
    <path d="M380 532L696 350M919 350L1169 495M380 532L854 805L1038 699.500M1108 659.500L1169 624" stroke="#222" strokeWidth="1.200" strokeDasharray="12 2 3 2" />
    <path d="M380 532L854 805L1038 699.500M1108 659.500L1169 624" stroke="#8c8c8c" strokeWidth="1.500" strokeDasharray="16 14" />
    {[
      [484, 526, "url(#h1)"],
      [866, 746, "url(#h2)"],
    ].map(([x, y, clip]) => (
      <g key={x as number}>
        <ellipse cx={x} cy={y} rx="24.500" ry="14" fill="url(#wall)" />
        <g clipPath={clip as string}>
          <ellipse cx={x} cy={(y as number) + 8} rx="24.500" ry="14" fill="#fff" stroke="#111" strokeWidth="1.300" />
        </g>
        <ellipse cx={x} cy={y} rx="24.500" ry="14" stroke="#111" strokeWidth="1.300" />
      </g>
    ))}
    <g stroke="#858585" strokeDasharray="14 4 4 4">
      <path d="M696 350L808 286L919 350M1169 495L1282 560L1169 624M1108 659.500L1038 699.500" />
      <path d="M797 419L488 597M818 417L1052 553M1052 565L744 743" />
    </g>
    <g fill="#7c7c7c">
      <circle cx="808" cy="286" r="2.800" />
      <circle cx="1282" cy="559.500" r="2.800" />
      <circle cx="797" cy="418" r="2.500" />
      <circle cx="818" cy="418" r="2.500" />
      <circle cx="381" cy="532.500" r="2.500" />
      <circle cx="489" cy="596" r="2.500" />
      <circle cx="744" cy="742" r="2.500" />
      <circle cx="1052" cy="565" r="2.500" />
      <circle cx="1052" cy="553" r="2.500" />
    </g>
  </svg>
);

const Triad = () => (
  <svg viewBox="0 0 60 60" className="size-[60px]" fill="none" aria-hidden="true">
    <path d="M29 36V16" stroke="#176b1c" strokeWidth="4" />
    <path d="M24 18L29 9L34 18Q29 22 24 18Z" fill="#1e7a24" stroke="#0c4210" strokeWidth=".6" />
    <path d="M29 35L44 42" stroke="#c01818" strokeWidth="4" />
    <path d="M44 38L52 47L41 46Z" fill="#e02828" stroke="#8a0d0d" strokeWidth=".8" />
    <path d="M29 35L15 42" stroke="#1a1ab4" strokeWidth="4" />
    <path d="M13 38L7 47L17 46Z" fill="#2a2ae0" stroke="#0d0d7a" strokeWidth=".8" />
    <path d="M26 1L29 5L32 1M29 5V9" stroke="#1da028" />
    <path d="M50 43L55 52M55 43L50 52" stroke="#ee1c1c" />
    <path d="M2 44H7L2 52H7" stroke="#1c1cee" />
  </svg>
);

const Viewport = () => (
  <main className="relative min-w-0 flex-1 border-b border-r border-[#15161f] border-r-[#6b7086] bg-white">
    <Model />
    <div className="relative flex h-7 items-center pl-[403px] pr-[9px]">
      <div className="flex flex-1 items-center">
        <button aria-label="Isometric" className="mr-0.5 flex h-[23px] w-6 items-center justify-center rounded border border-[#55586a] bg-[#9698ab]">
          <Ico>
            <path d="M8 1L14.500 4V11.500L8 15L1.500 11.500V4Z" fill="#5aa4ec" stroke="#17487c" />
            <path d="M1.500 4L8 7.500L14.500 4L8 1Z" fill="#a5d2fa" />
            <path d="M1.500 4L8 7.500L14.500 4M8 7.500V15" stroke="#e6f4ff" strokeWidth=".8" />
          </Ico>
        </button>
        {hud.map((h) => (
          <div key={h.name} className={`flex items-center ${h.drop ? "w-[33px] gap-1" : "w-[23px]"}`}>
            <button aria-label={h.name}>
              <Ico>{h.art}</Ico>
            </button>
            {h.drop && <Caret />}
          </div>
        ))}
      </div>
      {docButtons.map((d) => (
        <button key={d.name} aria-label={d.name} className={d.w}>
          <Ico>{d.art}</Ico>
        </button>
      ))}
    </div>
    <button aria-label="Exit flat pattern" className="absolute right-[47px] top-10">
      <svg viewBox="0 0 56 48" className="h-12 w-14" fill="none" aria-hidden="true">
        <path d="M1 1H33L40 18V29H8L1 13Z" fill="#e8eaec" stroke="#c3c6c9" />
        <path d="M1 1L8 18H40M8 18V29" stroke="#c3c6c9" />
        <path d="M14 1H21L28 18V29H22V18Z" fill="#fce5d3" stroke="#f2c9ab" />
        <path d="M24 4L34 14M6 5L14 15" stroke="#fff" strokeWidth="3" />
        <path d="M46 23C58 25 56 37 47 40V46L38 38L47 30V35C51 33 51 28 46 23Z" fill="#ead6f2" stroke="#d3b2e2" />
      </svg>
    </button>
    <div className="absolute right-0 top-[60px] flex flex-col">
      {taskTabs.map((t, i) => (
        <button
          key={t.name}
          aria-label={t.name}
          className={`flex h-6 w-[23px] items-center justify-center rounded-l border border-r-0 border-[#6f7389] ${i === 2 ? "bg-[#eceef4]" : "bg-[#b4b7ca]"}`}
        >
          <Ico>{t.art}</Ico>
        </button>
      ))}
    </div>
    <button aria-label="Collapse panel" className="absolute -left-px bottom-[391px] flex h-[29px] w-[9px] flex-col items-center justify-around rounded-r border border-[#5c6082] bg-[#c6c9da] py-1">
      {[0, 1, 2].map((k) => (
        <svg key={k} viewBox="0 0 3 5" className="h-[5px] w-[3px]" aria-hidden="true">
          <path d="M3 0V5L0 2.500Z" fill="#3c4068" />
        </svg>
      ))}
    </button>
    <div className="absolute bottom-0 left-[11px]">
      <Triad />
      <div className="mt-4 text-[12px] leading-4 font-bold text-[#2f2b66] [font-family:'DejaVu_Sans_Condensed','DejaVu_Sans',sans-serif]">*Isometric</div>
    </div>
  </main>
);

/* ---------- bottom bars ---------- */

const navPaths = ["M3 2V9M9 2L5 5.500L9 9Z", "M8 2L4 5.500L8 9Z", "M4 2L8 5.500L4 9Z", "M9 2V9M3 2L7 5.500L3 9Z"];

const BottomTabs = () => (
  <nav className="flex h-[15px] shrink-0 items-start bg-[#e2e4ec] text-[12px] leading-[13px]">
    <div className="ml-0.5 flex">
      {navPaths.map((d) => (
        <button key={d} aria-label="Scroll tabs" className="flex h-[14px] w-4 items-center justify-center border border-[#9194a8] bg-[#b9bccd]">
          <svg viewBox="0 0 12 11" className="h-[11px] w-3 shrink-0" fill="#8f92a5" stroke="#8f92a5" aria-hidden="true">
            <path d={d} />
          </svg>
        </button>
      ))}
    </div>
    <button className="ml-0.5 h-[14px] w-[55px] border-b border-r-2 border-l border-[#3f4254] bg-[#e2e4ec] font-bold text-[#111]">Model</button>
    <button className="h-[14px] w-[103px] border-b-2 border-r-2 border-[#3f4254] bg-[#b9bccd] pr-1 text-[#222]">Motion Study 1</button>
  </nav>
);

const VBar = () => <div className="h-3.5 w-0.5 border-l border-[#a6a9ba] bg-[#eceef6]" />;

const StatusBar = () => (
  <footer className="seg flex h-[19px] shrink-0 items-center border-t border-[#a9acbd] bg-linear-to-b from-[#cfd2e1] to-[#c2c5d6] pb-px pl-0.5 text-[11px] leading-4 text-[#111]">
    <span className="flex-1">SolidWorks Premium 2013 x64 Edition</span>
    <VBar />
    <div className="w-1.5" />
    <VBar />
    <span className="w-20 pl-1.5">Editing Part</span>
    <VBar />
    <div className="w-1.5" />
    <VBar />
    <button className="ml-5 flex items-center gap-2">
      MMGS
      <Caret c="rotate-180" />
    </button>
    <button aria-label="Quick tips" className="ml-5">
      <Ico c="size-[14px]">
        <rect x=".7" y=".7" width="14.600" height="14.600" fill="#fff" stroke="#2d4ea0" strokeWidth="1.300" />
        <path d="M5 6C5 2.500 11 2.500 11 5.500C11 8 8 7.500 8 10M8 11.500V13.500" stroke="#149a2a" strokeWidth="2.200" />
      </Ico>
    </button>
    <button aria-label="Tags" className="ml-[50px]">
      <Ico>
        <path d="M1 10L9 2L14 1.500L15 6L7 14.500Q5 16 3.500 14.500L1 12Z" fill="#f8c52c" stroke="#8a5a08" />
        <circle cx="12" cy="4" r="1.300" fill="#fff" stroke="#8a5a08" strokeWidth=".7" />
        <path d="M4.500 10L8 13M6.500 8L10 11M8.500 6L12 9" stroke="#b27c12" strokeWidth=".8" />
      </Ico>
    </button>
    <svg viewBox="0 0 10 10" className="ml-3 mr-0.5 size-2.5 self-end" fill="#fff" aria-hidden="true">
      <path d="M7 0H9V2H7ZM7 4H9V6H7ZM4 4H6V6H4ZM7 8H9V10H7ZM4 8H6V10H4ZM1 8H3V10H1Z" />
    </svg>
  </footer>
);

export default function App() {
  return (
    <div className="flex h-screen min-w-[1200px] flex-col overflow-hidden rounded-lg border border-[#1b1e26] bg-linear-to-b from-[#b4cdec] via-[#a9cdf3] to-[#b9d5f2] px-1.5 pt-[5px] pb-[5px] font-['Liberation_Sans',Arial,sans-serif] [&_.seg]:[font-family:'Noto_Sans',sans-serif] [&_.tah]:[font-family:'DejaVu_Sans_Condensed','DejaVu_Sans',sans-serif]">
      <div className="flex min-h-0 flex-1 flex-col border border-[#5c6478]">
        <TitleBar />
        <Ribbon />
        <div className="flex min-h-0 flex-1 bg-[#e2e4ec]">
          <FeaturePanel />
          <Viewport />
        </div>
        <BottomTabs />
        <StatusBar />
      </div>
    </div>
  );
}
